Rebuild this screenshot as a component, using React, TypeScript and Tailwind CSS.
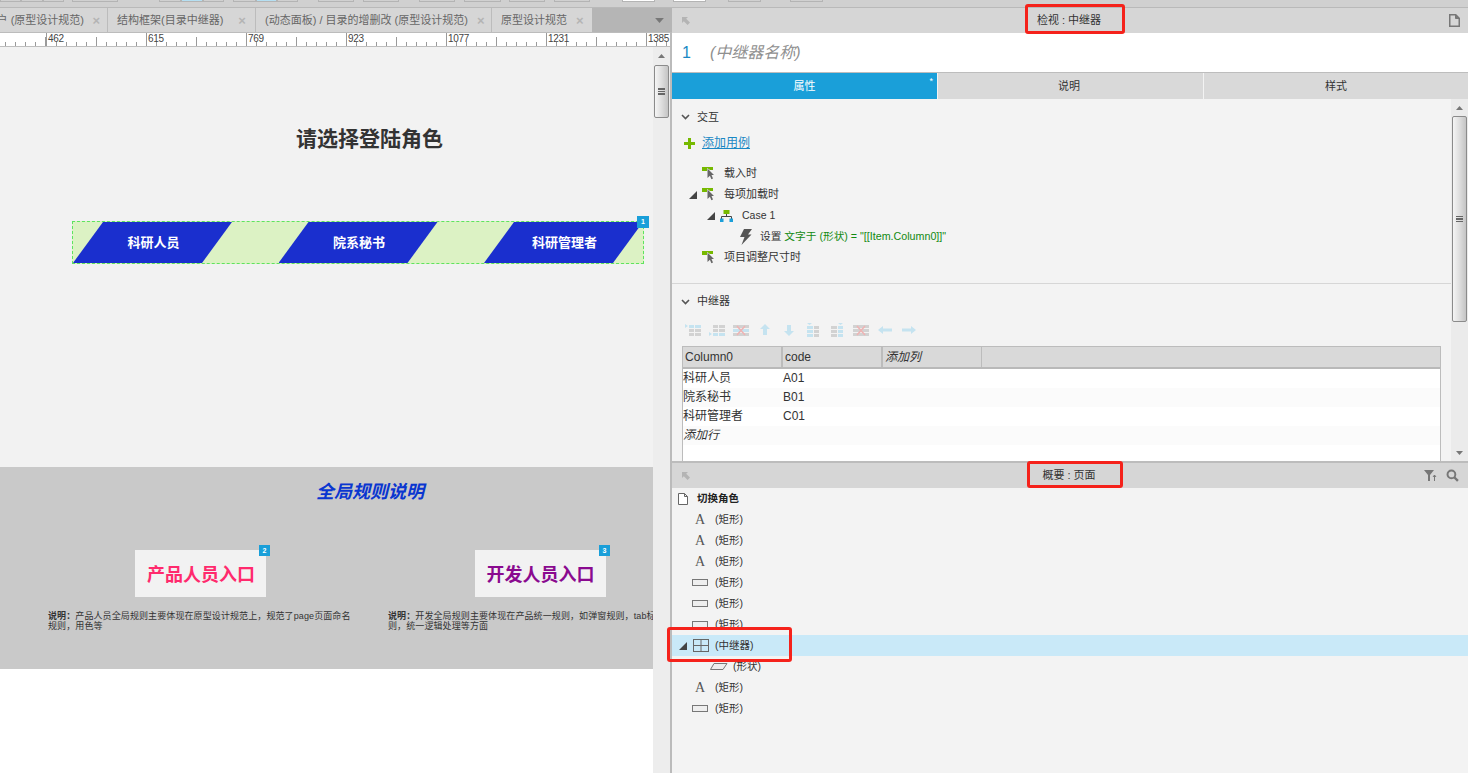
import React from "react";

const FONT = "font-['Liberation_Sans','Noto_Sans_CJK_SC',sans-serif]";

function ToolBtn({ w, color }: { w: string; color?: string }) {
  return <div className={`${w} h-[2px] border-x border-b border-[#b4b4b4] ${color ?? ""}`} />;
}

function TopStrip() {
  return (
    <div className="h-[8px] w-full bg-[#d0d0d0] border-b border-[#b9b9b9] flex items-start shrink-0 overflow-hidden">
      <div className="ml-0 flex"><ToolBtn w="w-[21px]" /><ToolBtn w="w-[22px]" /><ToolBtn w="w-[21px]" /></div>
      <div className="ml-[8px]"><ToolBtn w="w-[46px]" /></div>
      <div className="ml-[41px] flex"><ToolBtn w="w-[22px]" /><ToolBtn w="w-[22px]" color="bg-[#b5dff2]" /><ToolBtn w="w-[21px]" /></div>
      <div className="ml-[9px] flex"><ToolBtn w="w-[23px]" /><ToolBtn w="w-[21px]" color="bg-[#b5dff2]" /><ToolBtn w="w-[21px]" /></div>
      <div className="ml-[20px]"><ToolBtn w="w-[36px]" /></div>
      <div className="ml-[9px]"><ToolBtn w="w-[36px]" /></div>
      <div className="ml-[20px]"><ToolBtn w="w-[36px]" /></div>
      <div className="ml-[9px]"><ToolBtn w="w-[37px]" /></div>
      <div className="ml-[8px]"><ToolBtn w="w-[36px]" /></div>
      <div className="ml-[9px]"><ToolBtn w="w-[36px]" /></div>
      <div className="ml-[32px]"><ToolBtn w="w-[33px]" color="bg-white" /></div>
      <div className="ml-[18px]"><ToolBtn w="w-[33px]" color="bg-white" /></div>
      <div className="ml-[22px]"><ToolBtn w="w-[33px]" /></div>
      <div className="ml-[29px]"><ToolBtn w="w-[33px]" /></div>
    </div>
  );
}

function Tab({ w, label, pl, x, first }: { w: string; label: string; pl: string; x: string; first?: boolean }) {
  return (
    <div className={`${w} h-full shrink-0 flex items-center border-r border-[#bcbcbc] overflow-hidden relative ${first ? "justify-end pr-[23px]" : pl}`}>
      <span className="text-[11px] text-[#666] whitespace-nowrap">{label}</span>
      <span className={`text-[13px] font-bold text-[#b4b4b4] leading-none ${first ? "absolute right-[7px]" : x}`}>×</span>
    </div>
  );
}

function Ticks({ width, offset = 0 }: { width: number; offset?: number }) {
  const items = [] as React.ReactNode[];
  for (let i = 0; i < 10; i++) {
    const x = offset + i * 10;
    if (x <= 0 || x > width) continue;
    const h = i === 5 ? 9 : 4;
    items.push(<line key={i} x1={x - 0.5} x2={x - 0.5} y1={13 - h} y2={13} stroke="#9a9a9a" />);
  }
  return (
    <svg width={width} height={13} className="block">
      {items}
    </svg>
  );
}

function RulerCell({ n }: { n: string }) {
  return (
    <div className="w-[100px] shrink-0 h-full border-l border-[#9a9a9a] relative">
      <Ticks width={99} />
      <span className="absolute left-[1px] top-0 text-[10px] leading-[12px] tracking-[-0.3px] text-[#444]">{n}</span>
    </div>
  );
}

function Ruler() {
  return (
    <div className="h-[14px] bg-white border-b border-[#bdbdbd] flex overflow-hidden shrink-0">
      <div className="w-[46px] shrink-0 h-full overflow-hidden">
        <Ticks width={46} offset={-4} />
      </div>
      {["462", "615", "769", "923", "1077", "1231", "1385"].map((n) => (
        <RulerCell key={n} n={n} />
      ))}
    </div>
  );
}

function Arrow({ down, className }: { down?: boolean; className?: string }) {
  return (
    <svg width="7" height="4" viewBox="0 0 7 4" className={className}>
      <path d={down ? "M0 0h7L3.5 4z" : "M3.5 0L7 4H0z"} fill="#777" />
    </svg>
  );
}

function Thumb({ h }: { h: string }) {
  return (
    <div className={`${h} w-[15px] mx-auto rounded-[2px] border border-[#8b8b8b] bg-linear-to-r from-[#f5f5f5] via-[#dedede] to-[#c4c4c4] flex flex-col items-center justify-center gap-[1px]`}>
      <div className="w-[7px] h-[1.5px] bg-[#666]" />
      <div className="w-[7px] h-[1.5px] bg-[#666]" />
      <div className="w-[7px] h-[1.5px] bg-[#666]" />
    </div>
  );
}

function RepeaterItem({ label }: { label: string }) {
  return (
    <div className="w-[205.5px] shrink-0 h-full">
      <div className="w-[159px] h-full pl-[2px] bg-[#1a2fce] [clip-path:polygon(30px_0,100%_0,129px_100%,0_100%)] flex items-center justify-center">
        <span className="text-white text-[13px] font-bold">{label}</span>
      </div>
    </div>
  );
}

function Canvas() {
  return (
    <div className="flex-1 min-w-0 overflow-hidden bg-white">
      <div className="h-[420px] bg-[#f2f2f2] flex flex-col">
        <div className="mt-[79px] h-[26px] leading-[26px] pl-[296px] text-[21px] font-bold text-[#333] whitespace-nowrap">请选择登陆角色</div>
        <div className="relative ml-[72px] mt-[69px] w-[572px] h-[43px] bg-[#dcf2c4] border border-dashed border-[#5fe35f] flex overflow-visible">
          <div className="flex w-full overflow-hidden">
            <RepeaterItem label="科研人员" />
            <RepeaterItem label="院系秘书" />
            <RepeaterItem label="科研管理者" />
          </div>
          <div className="absolute -top-[6px] right-[-6px] w-[12px] h-[12px] bg-[#1a9fd9] text-white text-[7px] font-bold leading-[12px] text-center">1</div>
        </div>
      </div>
      <div className="h-[202px] bg-[#c9c9c9] flex flex-col">
        <div className="mt-[13px] h-[24px] leading-[24px] pl-[316px] text-[18px] font-bold italic text-[#0a36d0] whitespace-nowrap">全局规则说明</div>
        <div className="mt-[46px] flex">
          <div className="ml-[135px] w-[131px] h-[47px] pt-[3px] pl-[1px] bg-[#f2f2f2] flex items-center justify-center relative">
            <span className="text-[18px] font-bold text-[#ff2a6d] whitespace-nowrap">产品人员入口</span>
            <div className="absolute -top-[5px] right-[-4px] w-[11px] h-[11px] bg-[#1a9fd9] text-white text-[7px] font-bold leading-[11px] text-center">2</div>
          </div>
          <div className="ml-[209px] w-[131px] h-[47px] pt-[3px] bg-[#f2f2f2] flex items-center justify-center relative">
            <span className="text-[18px] font-bold text-[#8a0a8f] whitespace-nowrap">开发人员入口</span>
            <div className="absolute -top-[5px] right-[-4px] w-[11px] h-[11px] bg-[#1a9fd9] text-white text-[7px] font-bold leading-[11px] text-center">3</div>
          </div>
        </div>
        <div className="mt-[14px] flex text-[9px] leading-[10px] tracking-[0.1px] text-[#333] whitespace-nowrap">
          <div className="ml-[48px] w-[340px] shrink-0">
            <div><b>说明：</b>产品人员全局规则主要体现在原型设计规范上，规范了page页面命名</div>
            <div>规则，用色等</div>
          </div>
          <div className="shrink-0">
            <div><b>说明：</b>开发全局规则主要体现在产品统一规则，如弹窗规则，tab标签规</div>
            <div>则，统一逻辑处理等方面</div>
          </div>
        </div>
      </div>
    </div>
  );
}

function LeftPane() {
  return (
    <div className="w-[672px] shrink-0 flex flex-col h-full">
      <div className="h-[25px] shrink-0 flex bg-[#b5b5b5] border-b border-[#bcbcbc]">
        <div className="w-[592px] shrink-0 flex bg-[#d6d6d6] overflow-hidden">
          <Tab w="w-[108px]" label="户 (原型设计规范)" pl="" x="" first />
          <Tab w="w-[148px]" label="结构框架(目录中继器)" pl="pl-[9px]" x="ml-[15px]" />
          <Tab w="w-[236px]" label="(动态面板) / 目录的增删改 (原型设计规范)" pl="pl-[9px]" x="ml-[9px]" />
          <Tab w="w-[100px] border-r-0" label="原型设计规范" pl="pl-[9px]" x="ml-[9px]" />
        </div>
        <div className="flex-1 flex items-center justify-end pr-[8px] bg-[#b5b5b5]">
          <Arrow down className="w-[9px] h-[5px]" />
        </div>
      </div>
      <div className="flex-1 min-h-0 flex flex-col border-r-[2px] border-[#bbbbbb]">
        <Ruler />
        <div className="flex-1 min-h-0 flex">
          <Canvas />
          <div className="w-[17px] shrink-0 bg-[#ededed] flex flex-col items-center">
            <div className="h-[18px] flex items-center justify-center"><Arrow /></div>
            <Thumb h="h-[53px]" />
          </div>
        </div>
      </div>
    </div>
  );
}

function Collapse() {
  return (
    <svg width="9" height="6" viewBox="0 0 9 6" className="block">
      <path d="M1 1l3.5 3.5L8 1" fill="none" stroke="#555" strokeWidth="1.6" />
    </svg>
  );
}

function Expanded() {
  return (
    <svg width="8" height="8" viewBox="0 0 8 8" className="block shrink-0">
      <path d="M8 0v8H0z" fill="#444" />
    </svg>
  );
}

function TriggerIcon() {
  return (
    <svg width="14" height="14" viewBox="0 0 14 14" className="block shrink-0">
      <path d="M0 0h11v3H8L5 1v3H0z" fill="#76b900" />
      <path d="M5.5 1.5L12 8H9.5l1.5 3.5-1.6.7L7.9 8.8 5.5 11z" fill="#666" />
    </svg>
  );
}

function CaseIcon() {
  return (
    <svg width="13" height="12" viewBox="0 0 13 12" className="block shrink-0">
      <rect x="3.5" y="0" width="6" height="4" fill="#76b900" />
      <path d="M6.5 4v2.5M1.5 9V6.5h10V9" fill="none" stroke="#444" />
      <rect x="0" y="8.5" width="3.5" height="3.5" fill="#1a9fd9" />
      <rect x="9.5" y="8.5" width="3.5" height="3.5" fill="#1a9fd9" />
    </svg>
  );
}

function Bolt() {
  return (
    <svg width="12" height="16" viewBox="0 0 12 16" className="block shrink-0">
      <path d="M4 0h8L8 5.5h3.5L1.5 16 4.5 8H0z" fill="#555" />
    </svg>
  );
}

function GridIcon({ kind }: { kind: number }) {
  const b = "#c5e3f0";
  const g = "#d2d2d2";
  if (kind === 3 || kind === 4) {
    return (
      <svg width="16" height="14" viewBox="0 0 16 14">
        <path d={kind === 3 ? "M8 1l5 5h-3v6H6V6H3z" : "M8 13l5-5h-3V2H6v6H3z"} fill={b} />
      </svg>
    );
  }
  if (kind === 8 || kind === 9) {
    return (
      <svg width="16" height="14" viewBox="0 0 16 14">
        <path d={kind === 8 ? "M1 7l5-4v2.5h9v3H6V11z" : "M15 7l-5-4v2.5H1v3h9V11z"} fill={b} />
      </svg>
    );
  }
  if (kind === 2 || kind === 7) {
    return (
      <svg width="16" height="14" viewBox="0 0 16 14">
        <rect x="0" y="2" width="16" height="3" fill={g} />
        <rect x="0" y="6" width="16" height="3" fill={kind === 2 ? b : g} />
        <rect x="0" y="10" width="16" height="3" fill={g} />
        <path d="M4 3l8 9M12 3l-8 9" stroke="#eeb4b4" strokeWidth="1.6" />
      </svg>
    );
  }
  if (kind === 5 || kind === 6) {
    const l = kind === 5 ? b : g;
    const r = kind === 5 ? g : b;
    return (
      <svg width="16" height="14" viewBox="0 0 16 14">
        <path d={kind === 5 ? "M2 0h5L4.5 2z" : "M9 0h5l-2.500 2z"} fill={b} />
        <rect x="2" y="3" width="6" height="3" fill={l} />
        <rect x="2" y="7" width="6" height="3" fill={l} />
        <rect x="2" y="11" width="6" height="3" fill={l} />
        <rect x="9" y="3" width="5" height="3" fill={r} />
        <rect x="9" y="7" width="5" height="3" fill={r} />
        <rect x="9" y="11" width="5" height="3" fill={r} />
      </svg>
    );
  }
  return (
    <svg width="16" height="14" viewBox="0 0 16 14">
      <path d={kind === 0 ? "M0 1l3 2-3 2z" : "M0 9l3 2-3 2z"} fill={b} />
      <rect x="4" y="2" width="5" height="3" fill={kind === 0 ? b : g} />
      <rect x="10" y="2" width="6" height="3" fill={kind === 0 ? b : g} />
      <rect x="4" y="6" width="5" height="3" fill={g} />
      <rect x="10" y="6" width="6" height="3" fill={g} />
      <rect x="4" y="10" width="5" height="3" fill={kind === 0 ? g : b} />
      <rect x="10" y="10" width="6" height="3" fill={kind === 0 ? g : b} />
    </svg>
  );
}

function PanelHeader({ title, right }: { title: string; right: React.ReactNode }) {
  return (
    <div className="h-[25px] shrink-0 bg-[#d6d6d6] flex items-center relative pl-[10px] pr-[8px]">
      <svg width="8" height="8" viewBox="0 0 8 8" className="block">
        <path d="M0 0h6L4.2 1.800 8 5.600 5.600 8 1.800 4.200 0 6z" fill="#b4b4b4" />
      </svg>
      <span className="absolute left-[297px] w-[200px] text-center text-[11px] text-[#333]">{title}</span>
      <div className="flex-1" />
      {right}
    </div>
  );
}

const rows: [string, string][] = [
  ["科研人员", "A01"],
  ["院系秘书", "B01"],
  ["科研管理者", "C01"],
  ["添加行", ""],
];

function Inspector() {
  return (
    <div className="h-[455px] shrink-0 flex flex-col">
      <PanelHeader
        title="检视 : 中继器"
        right={
          <svg width="11" height="13" viewBox="0 0 11 13" className="block">
            <path d="M.75.75h6l3.5 3.5v8H.75z" fill="none" stroke="#777" strokeWidth="1.5" />
            <path d="M6.500 1v3.500H10" fill="#777" stroke="#777" />
          </svg>
        }
      />
      <div className="h-[40px] shrink-0 bg-white border-b border-[#bdbdbd] flex items-center text-[16px]">
        <span className="ml-[10px] w-[28px] text-[#1a88c4]">1</span>
        <span className="italic text-[#8f8f8f]">(中继器名称)</span>
      </div>
      <div className="h-[26px] shrink-0 flex text-[11px]">
        <div className="w-[265px] bg-[#1a9fd9] text-white flex items-center justify-center relative">
          属性
          <span className="absolute right-[4px] top-[4px] text-[9px] leading-none">*</span>
        </div>
        <div className="w-[265px] ml-[1px] pr-[3px] bg-[#d9d9d9] text-[#333] flex items-center justify-center">说明</div>
        <div className="flex-1 ml-[1px] bg-[#d9d9d9] text-[#333] flex items-center justify-center">样式</div>
      </div>
      <div className="flex-1 min-h-0 flex bg-[#f3f3f3] border-b-[2px] border-[#bcbcbc]">
        <div className="flex-1 min-w-0 overflow-hidden text-[11px] text-[#333]">
          <div className="h-[36px] flex items-center pl-[9px] gap-[7px]"><Collapse /><span>交互</span></div>
          <div className="h-[16px] flex items-center pl-[12px] gap-[7px]">
            <svg width="11" height="11" viewBox="0 0 11 11" className="block shrink-0">
              <path d="M4 0h3v4h4v3H7v4H4V7H0V4h4z" fill="#76b900" />
            </svg>
            <span className="text-[12px] text-[#1a88c4] underline">添加用例</span>
          </div>
          <div className="mt-[12px] h-[21px] flex items-center pl-[30px] gap-[8px]"><TriggerIcon /><span>载入时</span></div>
          <div className="h-[21px] flex items-center pl-[17px] gap-[5px]"><Expanded /><TriggerIcon /><span className="ml-[3px]">每项加载时</span></div>
          <div className="h-[21px] flex items-center pl-[35px] gap-[5px]"><Expanded /><CaseIcon /><span className="ml-[4px] text-[10.5px]">Case 1</span></div>
          <div className="h-[21px] flex items-center pl-[68px] gap-[8px]">
            <Bolt />
            <span className="whitespace-nowrap text-[10.7px]">设置 <span className="text-[#128a12]">文字于 (形状) = "[[Item.Column0]]"</span></span>
          </div>
          <div className="h-[21px] flex items-center pl-[30px] gap-[8px]"><TriggerIcon /><span>项目调整尺寸时</span></div>
          <div className="mt-[15px] border-t border-[#d6d6d6]" />
          <div className="h-[35px] flex items-center pl-[9px] gap-[7px]"><Collapse /><span>中继器</span></div>
          <div className="h-[22px] pl-[13px] flex items-center gap-[8px]">
            {[0, 1, 2, 3, 4, 5, 6, 7, 8, 9].map((k) => <GridIcon key={k} kind={k} />)}
          </div>
          <div className="mt-[5px] ml-[10px] mr-[10px] h-[200px] border border-[#bcbcbc] bg-white text-[12px]">
            <div className="h-[22px] bg-[#d9d9d9] border-b-[2px] border-[#b9b9b9] flex">
              <div className="w-[100px] border-r-[2px] border-[#bcbcbc] pl-[2px] leading-[20px]">Column0</div>
              <div className="w-[100px] border-r-[2px] border-[#bcbcbc] pl-[2px] leading-[20px]">code</div>
              <div className="w-[99px] border-r border-[#bcbcbc] pl-[2px] leading-[20px] italic">添加列</div>
            </div>
            {rows.map(([a, b], i) => (
              <div key={a} className={`h-[19px] flex leading-[19px] ${i % 2 ? "bg-[#fbfbfb]" : "bg-white"}`}>
                <div className={`w-[100px] ${i === 3 ? "italic" : ""}`}>{a}</div>
                <div>{b}</div>
              </div>
            ))}
          </div>
        </div>
        <div className="w-[17px] shrink-0 bg-[#ebebeb] flex flex-col items-center">
          <div className="h-[17px] flex items-center justify-center"><Arrow /></div>
          <Thumb h="h-[206px]" />
          <div className="flex-1" />
          <div className="h-[17px] flex items-center justify-center"><Arrow down /></div>
        </div>
      </div>
    </div>
  );
}

function AIcon() {
  return <span className="w-[16px] text-center font-['Liberation_Serif',serif] text-[14px] leading-none text-[#555]">A</span>;
}

function RectIcon() {
  return <span className="w-[16px] h-[7px] border-[1.5px] border-[#777] bg-[#eee]" />;
}

function OutlineRow({ icon }: { icon: "a" | "r" }) {
  return (
    <div className="h-[21px] flex items-center pl-[20px] gap-[7px]">
      {icon === "a" ? <AIcon /> : <RectIcon />}
      <span>(矩形)</span>
    </div>
  );
}

function Outline() {
  return (
    <div className="flex-1 min-h-0 flex flex-col">
      <PanelHeader
        title="概要 : 页面"
        right={
          <div className="flex items-center gap-[9px] pr-[1px]">
            <svg width="13" height="12" viewBox="0 0 13 12" className="block">
              <path d="M0 0h10L6 5v6H4V5z" fill="#777" />
              <path d="M10.500 11V5M9 7l1.500-2L12 7" fill="none" stroke="#777" />
            </svg>
            <svg width="13" height="13" viewBox="0 0 12 12" className="block">
              <circle cx="5" cy="5" r="3.600" fill="none" stroke="#777" strokeWidth="1.800" />
              <path d="M7.600 7.600L11 11" stroke="#777" strokeWidth="2.200" />
            </svg>
          </div>
        }
      />
      <div className="flex-1 bg-[#f3f3f3] text-[10.5px] text-[#333]">
        <div className="h-[21px] flex items-center pl-[6px] gap-[9px]">
          <svg width="10" height="12" viewBox="0 0 10 12" className="block">
            <path d="M.5.5h6l3 3v8H.5z M6.500.5v3h3" fill="#fff" stroke="#666" />
          </svg>
          <b className="text-[#222]">切换角色</b>
        </div>
        <OutlineRow icon="a" />
        <OutlineRow icon="a" />
        <OutlineRow icon="a" />
        <OutlineRow icon="r" />
        <OutlineRow icon="r" />
        <OutlineRow icon="r" />
        <div className="h-[21px] flex items-center pl-[7px] bg-[#c9e9f8]">
          <Expanded />
          <svg width="16" height="13" viewBox="0 0 16 13" className="block ml-[6px]">
            <rect x=".5" y=".5" width="15" height="12" fill="none" stroke="#666" />
            <path d="M8 .5v12M.5 6.500h15" stroke="#666" />
          </svg>
          <span className="ml-[6px]">(中继器)</span>
        </div>
        <div className="h-[21px] flex items-center pl-[38px] gap-[5px]">
          <svg width="18" height="7" viewBox="0 0 18 7" className="block">
            <path d="M4 .5h13L13 6.500H.5z" fill="#eee" stroke="#777" />
          </svg>
          <span>(形状)</span>
        </div>
        <OutlineRow icon="a" />
        <OutlineRow icon="r" />
      </div>
    </div>
  );
}

function RedBox({ className }: { className: string }) {
  return <div className={`absolute border-[3px] border-[#f5221b] rounded-[3px] pointer-events-none ${className}`} />;
}

export default function App() {
  return (
    <div className={`w-[1468px] h-[773px] relative overflow-hidden bg-[#f3f3f3] flex flex-col ${FONT}`}>
      <TopStrip />
      <div className="flex-1 min-h-0 flex">
        <LeftPane />
        <div className="flex-1 min-w-0 flex flex-col">
          <Inspector />
          <Outline />
        </div>
      </div>
      <RedBox className="left-[1025px] top-[4px] w-[100px] h-[30px]" />
      <RedBox className="left-[1027px] top-[461px] w-[96px] h-[27px]" />
      <RedBox className="left-[667px] top-[627px] w-[125px] h-[35px]" />
    </div>
  );
}
